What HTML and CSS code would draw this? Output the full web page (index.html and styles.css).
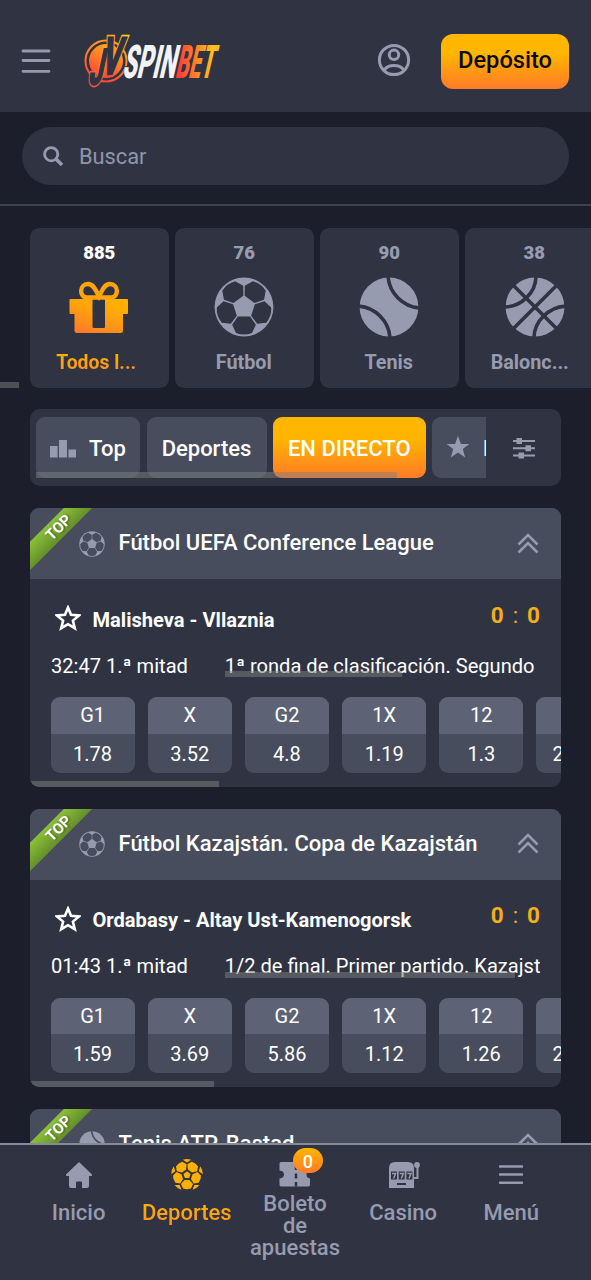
FILE: index.html
```html
<!DOCTYPE html>
<html lang="es">
<head>
<meta charset="utf-8">
<title>JVSpinbet</title>
<link rel="stylesheet" href="styles.css">
</head>
<body>
<svg class="defs" width="0" height="0" aria-hidden="true">
  <defs>
    <linearGradient id="gold" x1="0.8" y1="0" x2="0.2" y2="1"><stop offset="0" stop-color="#ffb200"/><stop offset="0.4" stop-color="#ffa40c"/><stop offset="1" stop-color="#ff7a28"/></linearGradient>
    <path id="cell" d="M-6.1-9.5H6.1L11.9-17.7L8-26Q0-29.2-8-26L-11.9-17.7Z"/>
    <mask id="ballmask" maskUnits="userSpaceOnUse" x="-30" y="-30" width="60" height="60">
      <circle r="29.4" fill="#fff"/>
      <g fill="#000"><use href="#cell" transform="rotate(36)"/><use href="#cell" transform="rotate(108)"/><use href="#cell" transform="rotate(180)"/><use href="#cell" transform="rotate(252)"/><use href="#cell" transform="rotate(324)"/></g>
    </mask>
    <mask id="tennismask" maskUnits="userSpaceOnUse" x="-30" y="-30" width="60" height="60">
      <circle r="29.4" fill="#fff"/>
      <path d="M-1-31C0-14 14 0 31 1M-31-1C-14 0 0 14 1 31" fill="none" stroke="#000" stroke-width="3.6"/>
    </mask>
    <mask id="basketmask" maskUnits="userSpaceOnUse" x="-30" y="-30" width="60" height="60">
      <circle r="29.4" fill="#fff"/>
      <path d="M-24-24L24 24M24-24L-24 24M1-31C1-14-14 0-31 0M-1 31C-1 14 14 0 31-1" fill="none" stroke="#000" stroke-width="3.6"/>
    </mask>
    <symbol id="soccer" viewBox="-30 -30 60 60"><rect x="-30" y="-30" width="60" height="60" fill="#969bb0" mask="url(#ballmask)"/></symbol>
    <symbol id="tennis" viewBox="-30 -30 60 60"><rect x="-30" y="-30" width="60" height="60" fill="#969bb0" mask="url(#tennismask)"/></symbol>
    <symbol id="basket" viewBox="-30 -30 60 60"><rect x="-30" y="-30" width="60" height="60" fill="#969bb0" mask="url(#basketmask)"/></symbol>
    <symbol id="collapse" viewBox="0 0 22 22"><path d="M1.5 11.5L11 2L20.5 11.5M1.5 19.5L11 10L20.5 19.5" fill="none" stroke="#969bb0" stroke-width="2.5"/></symbol>
    <symbol id="star" viewBox="0 0 26 26"><path d="M13 2.6L16 9.8L24 10.5L17.9 15.6L19.8 23.2L13 19.2L6.2 23.2L8.1 15.6L2 10.5L10 9.8Z" fill="none" stroke="#fff" stroke-width="2.6"/></symbol>
    <g id="bigpanel"><path d="M-2.5-5H2.5L6-9L3.9-13.4Q0-15-3.9-13.4L-6-9Z"/></g>
    <path id="edgepanel" d="M-4.2-15.3Q0-16.6 4.2-15.3L0-12.4Z"/>
  </defs>
</svg>

<div class="app">
  <header class="header">
    <svg class="burger" width="30" height="26" viewBox="0 0 30 26"><path d="M2 3H28M2 12.5H28M2 23.3H28" stroke="#9499ad" stroke-width="2.8" stroke-linecap="round"/></svg>
    <svg class="logo" width="140" height="60" viewBox="0 0 140 60">
      <defs>
        <linearGradient id="flame" x1="0.7" y1="0" x2="0.3" y2="1"><stop offset="0" stop-color="#ffa81c"/><stop offset="0.5" stop-color="#ff7a28"/><stop offset="1" stop-color="#ff4038"/></linearGradient>
        <linearGradient id="bet" gradientUnits="userSpaceOnUse" x1="2" y1="0" x2="62" y2="-30"><stop offset="0" stop-color="#ff3040"/><stop offset="0.5" stop-color="#ff7a28"/><stop offset="1" stop-color="#ffc01c"/></linearGradient>
        <linearGradient id="mono" gradientUnits="userSpaceOnUse" x1="36" y1="-38" x2="6" y2="4"><stop offset="0" stop-color="#ffd21c"/><stop offset="0.5" stop-color="#ff8a28"/><stop offset="1" stop-color="#ff3a48"/></linearGradient>
      </defs>
      <circle cx="26" cy="30" r="20.5" fill="none" stroke="url(#flame)" stroke-width="2"/>
      <circle cx="26" cy="30" r="17" fill="url(#flame)"/>
      <g class="monogram">
        <text transform="translate(8 53) skewX(-12) scale(.5 1)" font-size="49" stroke="url(#mono)" stroke-width="6">J</text>
        <text transform="translate(20.500 43) skewX(-12) scale(.56 1)" font-size="51" stroke="url(#mono)" stroke-width="6">V</text>
        <text transform="translate(8 53) skewX(-12) scale(.5 1)" font-size="49" fill="#303442" stroke="#303442" stroke-width="2.400">J</text>
        <text transform="translate(20.500 43) skewX(-12) scale(.56 1)" font-size="51" fill="#303442" stroke="#303442" stroke-width="2.400">V</text>
      </g>
      <g class="wordmark" font-size="46.500">
        <text transform="translate(41.500 47) skewX(-13)" textLength="53" lengthAdjust="spacingAndGlyphs" fill="#f3f3f5" stroke="#303442" stroke-width="2" paint-order="stroke">SPIN</text>
        <text transform="translate(94.500 47) skewX(-13) scale(.5 1)" textLength="76" lengthAdjust="spacingAndGlyphs" fill="url(#bet)">BET</text>
      </g>
    </svg>
    <svg class="user" width="34" height="34" viewBox="0 0 34 34" fill="none" stroke="#969bb0" stroke-width="3"><circle cx="17" cy="17" r="14.6"/><circle cx="17" cy="11.8" r="4.7"/><path d="M7.5 26.5C12 21.3 22 21.3 26.5 26.5"/></svg>
    <button class="deposit">Depósito</button>
  </header>

  <div class="search-area">
    <div class="search">
      <svg width="21" height="21" viewBox="0 0 21 21" fill="none" stroke="#969bb0"><circle cx="8.2" cy="8.2" r="6.6" stroke-width="2.8"/><path d="M13 13L19 19" stroke-width="3.6"/></svg>
      <span>Buscar</span>
    </div>
  </div>

  <nav class="sports">
    <div class="sport sport-active"><b>885</b>
      <svg width="60" height="60" viewBox="0 0 60 60"><path d="M1.500 22Q.5 22 .5 23V36Q.5 37 1.500 37H5.500V53.500Q5.500 56 8 56H51.500Q54 56 54 53.500V37H58Q59 37 59 36V23Q59 22 58 22H36V50Q36 51 35 51H25Q23.500 51 23.500 50V22Z" fill="url(#gold)"/><path d="M29 20.500H18C10 20.500 10 7 19 7C25 7 27 14 30 19.500C33 14 35 7 41 7C50 7 50 20.500 42 20.500Z" fill="none" stroke="#ffa40c" stroke-width="4.400"/></svg>
      <span class="clip-a">Todos l...</span></div>
    <div class="sport"><b>76</b><svg width="60" height="60"><use href="#soccer"/></svg><span>Fútbol</span></div>
    <div class="sport"><b>90</b><svg width="60" height="60"><use href="#tennis"/></svg><span>Tenis</span></div>
    <div class="sport"><b>38</b><svg class="basketball" width="60" height="60"><use href="#basket"/></svg><span class="clip-b">Balonc...</span></div>
    <i class="scroll scroll-sports"></i>
  </nav>

  <div class="filters">
    <div class="tabs">
      <div class="tab tab-top"><svg width="26" height="18" viewBox="0 0 26 18"><path d="M0 6H7.6V17.5H0ZM9 0H17V17.5H9ZM18.5 9.5H26V17.5H18.5Z" fill="#969bb0"/></svg><span>Top</span></div>
      <div class="tab tab-sports">Deportes</div>
      <div class="tab tab-live">EN DIRECTO</div>
      <div class="tab tab-fav"><svg width="24" height="24" viewBox="0 0 24 24"><path d="M12 .8L14.9 9H23.5L16.8 14.1L19.2 22.4L12 17.5L4.8 22.4L7.2 14.1L.5 9H9.1Z" fill="#969bb0"/></svg><span>Favoritos</span></div>
      <i class="scroll scroll-tabs"></i>
    </div>
    <svg class="sliders" width="24" height="22" viewBox="0 0 24 22"><path d="M1 4H23M1 11.2H23M1 18.6H23" stroke="#969bb0" stroke-width="2"/><path d="M4.5 1H10V7H4.5ZM13.5 8.2H19V14.2H13.5ZM6.5 15.6H12V21.6H6.5Z" fill="#969bb0"/></svg>
  </div>

  <section class="league">
    <div class="league-head"><div class="ribbon">TOP</div><svg width="26" height="26"><use href="#soccer"/></svg><h2>Fútbol UEFA Conference League</h2><svg class="chevrons" width="22" height="22"><use href="#collapse"/></svg></div>
    <div class="match">
      <div class="teams"><svg width="26" height="26"><use href="#star"/></svg><b>Malisheva - Vllaznia</b><span class="score"><b>0</b><span>:</span><b>0</b></span></div>
      <div class="info"><span class="time">32:47 1.ª mitad</span><span class="stage">1ª ronda de clasificación. Segundo<i class="scroll scroll-stage"></i></span></div>
      <div class="odds">
        <div class="odd"><span>G1</span><span>1.78</span></div><div class="odd"><span>X</span><span>3.52</span></div><div class="odd"><span>G2</span><span>4.8</span></div><div class="odd"><span>1X</span><span>1.19</span></div><div class="odd"><span>12</span><span>1.3</span></div><div class="odd odd-cut"><span>2X</span><span>2.04</span></div>
      </div>
      <i class="scroll scroll-odds"></i>
    </div>
  </section>

  <section class="league league-second">
    <div class="league-head"><div class="ribbon">TOP</div><svg width="26" height="26"><use href="#soccer"/></svg><h2>Fútbol Kazajstán. Copa de Kazajstán</h2><svg class="chevrons" width="22" height="22"><use href="#collapse"/></svg></div>
    <div class="match">
      <div class="teams"><svg width="26" height="26"><use href="#star"/></svg><b>Ordabasy - Altay Ust-Kamenogorsk</b><span class="score"><b>0</b><span>:</span><b>0</b></span></div>
      <div class="info"><span class="time">01:43 1.ª mitad</span><span class="stage">1/2 de final. Primer partido. Kazajstán<i class="scroll scroll-stage"></i></span></div>
      <div class="odds">
        <div class="odd"><span>G1</span><span>1.59</span></div><div class="odd"><span>X</span><span>3.69</span></div><div class="odd"><span>G2</span><span>5.86</span></div><div class="odd"><span>1X</span><span>1.12</span></div><div class="odd"><span>12</span><span>1.26</span></div><div class="odd odd-cut"><span>2X</span><span>2.28</span></div>
      </div>
      <i class="scroll scroll-odds"></i>
    </div>
  </section>

  <section class="league league-third">
    <div class="league-head"><div class="ribbon">TOP</div><svg width="26" height="26"><use href="#tennis"/></svg><h2>Tenis ATP. Bastad</h2><svg class="chevrons" width="22" height="22"><use href="#collapse"/></svg></div>
  </section>

  <nav class="bottom">
    <div class="item"><svg width="34" height="34" viewBox="0 0 34 34"><path d="M17 4L30 16.5Q30.4 18 29 18H27V28Q27 30 25 30H20V24.5Q20 23.5 19 23.5H15Q14 23.5 14 24.5V30H9Q7 30 7 28V18H5Q3.600 18 4 16.500Z" fill="#969bb0"/></svg><span>Inicio</span></div>
    <div class="item item-active"><svg width="34" height="34" viewBox="-17 -17 34 34" fill="#ffb000"><path d="M0-3.7L3.5-1.1L2.2 3H-2.200L-3.500-1.100Z"/><use href="#bigpanel" transform="rotate(36)"/><use href="#bigpanel" transform="rotate(108)"/><use href="#bigpanel" transform="rotate(180)"/><use href="#bigpanel" transform="rotate(252)"/><use href="#bigpanel" transform="rotate(324)"/><use href="#edgepanel"/><use href="#edgepanel" transform="rotate(72)"/><use href="#edgepanel" transform="rotate(144)"/><use href="#edgepanel" transform="rotate(216)"/><use href="#edgepanel" transform="rotate(288)"/></svg><span>Deportes</span></div>
    <div class="item item-slip"><svg width="34" height="34" viewBox="0 0 34 34"><path d="M3 4H30Q32 4 32 6V12.500Q28.500 13 28.500 16.500T32 20.500V26.500Q32 28.500 30 28.500H3Q1.500 28.500 1.500 26.500V20.500Q6 20 6 16.500T1.500 12.500V6Q1.500 4 3 4Z" fill="#969bb0"/><path d="M18 7V28.500" stroke="#303442" stroke-width="2.500" stroke-dasharray="5 3.500"/></svg><span>Boleto de apuestas</span><em class="badge">0</em></div>
    <div class="item"><svg width="34" height="34" viewBox="0 0 34 34"><path d="M3 30V10Q3 4 9 4H22Q28 4 28 10V30Z" fill="#969bb0"/><path d="M28 20H31.500V8" fill="none" stroke="#969bb0" stroke-width="2"/><circle cx="31" cy="7" r="2.900" fill="#969bb0"/><path d="M5 13.500H11V21.500H5ZM12.700 13.500H18.700V21.500H12.700ZM20.400 13.500H26.400V21.500H20.400Z" fill="#303442"/><path d="M6 15.500H9.600L7.600 20.500M13.700 15.500H17.300L15.300 20.500M21.400 15.500H25L23 20.500" fill="none" stroke="#969bb0" stroke-width="1.500"/><path d="M11 26H20" stroke="#303442" stroke-width="2"/></svg><span>Casino</span></div>
    <div class="item"><svg width="34" height="34" viewBox="0 0 34 34"><path d="M6 8.500H28M6 16.500H28M6 24.700H28" stroke="#969bb0" stroke-width="2.400" stroke-linecap="round"/></svg><span>Menú</span></div>
  </nav>
</div>
</body>
</html>
```
FILE: styles.css
```css
* { box-sizing: border-box; }
body { margin: 0; background: #1c1f2b; color: #fff; font-family: Roboto, "Noto Sans", sans-serif; }
.defs { position: absolute; }
.app { width: 591px; height: 1280px; overflow: hidden; display: flex; flex-direction: column; position: relative; }
.app > * { flex-shrink: 0; }
svg { display: block; flex: none; }

.header { height: 112px; background: #303442; display: flex; align-items: center; padding: 10px 22px 0 21px; }
.logo { margin-left: 29px; overflow: visible; }
.monogram text, .wordmark text { font-family: Roboto, sans-serif; font-weight: 900; }
.monogram text { font-weight: 700; }
.user { margin: -2px 0 0 157px; }
.deposit { margin: 0 0 0 auto; width: 128px; height: 55px; border: 0; border-radius: 12px; padding: 0 0 2px; background: linear-gradient(#ffb600 35%, #ff7a28); color: #0b0b0d; font: 500 23.600px Roboto, sans-serif; }

.search-area { height: 93.500px; padding: 15px 22px 0; border-bottom: 2px solid #3d4251; }
.search { height: 58px; border-radius: 29px; background: #303442; display: flex; align-items: center; gap: 15px; padding: 0 0 0 21px; color: #9195aa; font-size: 21.800px; }

.sports { position: relative; height: 160.500px; margin-top: 22px; padding-left: 30px; display: flex; gap: 6.500px; }
.sport { width: 138.500px; height: 160.500px; flex: none; border-radius: 9px; background: #303442; color: #969bb0; display: flex; flex-direction: column; align-items: center; padding-top: 13px; font-size: 19.800px; font-weight: 700; line-height: 24px; }
.sport b { font-size: 18.500px; }
.sport svg { margin: 12.500px 0 14px -1px; }
.sport .basketball { margin-left: 2px; }
.sport span { margin-right: 1px; }
.sport .clip-a { margin-right: 6px; }
.sport .clip-b { margin-right: 9px; }
.sport-active b { color: #fff; }
.sport-active span { background: linear-gradient(#ffb600, #ff8a20); background-clip: text; color: transparent; font-size: 19.400px; }
.scroll { position: absolute; background: rgba(128, 128, 128, .5); height: 6px; display: block; }
.scroll-sports { left: 0; bottom: 0; width: 19px; }

.filters { margin: 21px 30px 0; height: 77px; border-radius: 10px; background: #303442; display: flex; padding: 8px 6px; }
.tabs { position: relative; width: 449.500px; height: 61px; overflow: hidden; display: flex; gap: 6.500px; }
.tab { height: 61px; flex: none; border-radius: 9px; background: #474d5c; display: flex; align-items: center; justify-content: center; font-size: 22px; font-weight: 500; padding-top: 2px; }
.tab-top { width: 104px; gap: 13px; }
.tab-sports { width: 120px; }
.tab-live { width: 152.500px; background: linear-gradient(#ffb600 35%, #ff7a28); }
.tab-fav { width: 160px; gap: 13px; justify-content: flex-start; padding-left: 14px; }
.tab-fav svg { margin-top: -3px; }
.scroll-tabs { left: 0; bottom: 0; width: 361px; }
.sliders { margin: 20px 0 0 26px; }

.league { margin: 22.300px 30px 0; height: 278.300px; border-radius: 9px; background: #303442; overflow: hidden; }
.league-second { height: 278px; }
.league-third { margin-top: 21.700px; }
.league-head { position: relative; height: 71px; background: #474d5c; display: flex; align-items: center; padding: 0 22px 0 48.500px; }
.league-head h2 { margin: -2px auto 0 14px; font-size: 22px; font-weight: 500; white-space: nowrap; }
.ribbon { position: absolute; left: -26px; top: 14px; width: 100px; height: 20px; transform: rotate(-45deg); background: linear-gradient(#8cc038, #648f2c); font-size: 15px; font-weight: 700; line-height: 21px; text-align: center; padding-left: 13px; text-shadow: 1px 1px 2px rgba(0, 0, 0, .4); }
.match { position: relative; height: 207.300px; }
.teams { display: flex; align-items: center; height: 79.500px; padding: 0 21px 0 24.500px; font-size: 20.100px; }
.teams > svg { margin-top: -2px; }
.teams > b { margin-left: 12px; padding-top: 1px; }
.score { margin-left: auto; margin-top: -9px; display: flex; gap: 9px; color: #f5ae1a; font-size: 22.500px; }
.info { display: flex; padding: 0 21px; height: 38.500px; font-size: 20.100px; line-height: 28px; }
.time { width: 174px; margin-top: -7px; }
.stage { position: relative; width: 316px; height: 25.500px; margin-top: -7px; overflow: hidden; white-space: nowrap; }
.scroll-stage { left: 0; bottom: 0; width: 177px; }
.league-second .scroll-stage { width: 290px; }
.odds { display: flex; gap: 13px; padding-left: 20.500px; }
.odd { width: 84.200px; height: 75.500px; flex: none; border-radius: 9px; overflow: hidden; background: #474d5c; font-size: 20px; text-align: center; }
.odd span { display: block; line-height: 40px; height: 40px; }
.odd span:first-child { background: #5d6275; line-height: 37px; height: 36.500px; }
.odd-cut { width: 71px; }
.odd-cut span:first-child { padding-left: 8px; }
.scroll-odds { left: 0; bottom: 0; width: 189px; }
.league-second .scroll-odds { width: 184px; }

.bottom { position: absolute; left: 0; right: 0; bottom: 0; height: 137px; border-top: 2px solid #868b9c; background: #303442; display: flex; padding: 13px 25px 0 24.500px; }
.item { position: relative; width: 108.200px; display: flex; flex-direction: column; align-items: center; color: #969bb0; font-size: 22px; font-weight: 500; line-height: 22px; text-align: center; }
.item span { margin-top: 10px; }
.item-slip span { width: 92px; margin-top: 1px; }
.item-active span { background: linear-gradient(#ffb600, #ff8a20); background-clip: text; color: transparent; padding-bottom: 5px; }
.badge { position: absolute; left: 52px; top: -10px; width: 30px; height: 25px; border-radius: 13px; background: linear-gradient(#ffb600, #ff7a28); color: #fff; font-style: normal; font-size: 18px; line-height: 27px; }
```
